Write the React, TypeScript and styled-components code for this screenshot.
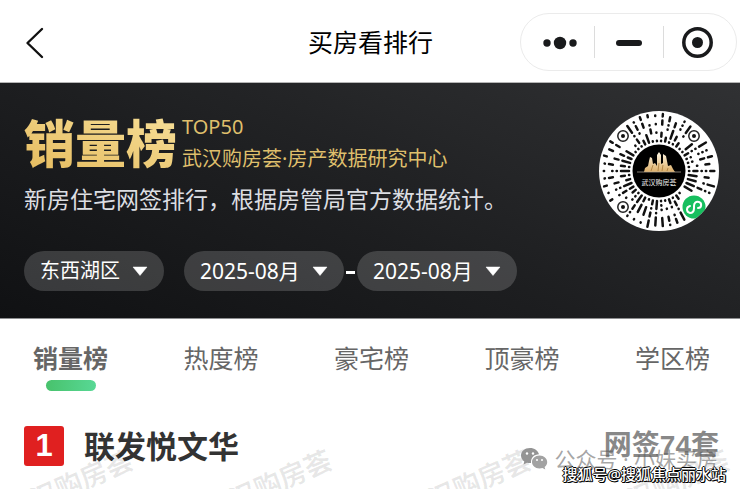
import React, { useState } from 'react';
import styled, { createGlobalStyle } from 'styled-components';

const GlobalStyle = createGlobalStyle`
  * { box-sizing: border-box; }
  body {
    margin: 0;
    background: #fff;
    font-family: "Noto Sans", "Noto Sans CJK SC", sans-serif;
  }
  button, select {
    margin: 0;
    padding: 0;
    border: 0;
    background: none;
    color: inherit;
    font: inherit;
    cursor: pointer;
  }
`;

const Page = styled.div`
  position: relative;
  height: 100vh;
  overflow: hidden;
`;

const NavBar = styled.header`
  display: grid;
  grid-template-columns: 1fr auto 1fr;
  align-items: center;
  padding: 13px 3px 11px 24px;
  border-bottom: 1px solid #b5b5b5;
`;

const BackButton = styled.button`
  display: flex;
  justify-self: start;
`;

const NavTitle = styled.h1`
  margin: 0;
  padding-right: 20px;
  font-size: 25px;
  line-height: 32px;
  font-weight: 400;
  color: #000;
`;

const Capsule = styled.div`
  display: flex;
  align-items: center;
  justify-self: end;
  height: 58px;
  padding: 0 4px;
  border: 1px solid #ebebeb;
  border-radius: 29px;
`;

const CapsuleButton = styled.button`
  display: flex;
  justify-content: center;
  width: 69px;
  & + & { border-left: 1px solid #dcdcdc; }
`;

const Hero = styled.section`
  padding: 28px 21px 27px 24px;
  color: #fff;
  background: linear-gradient(22deg, #101113 0%, #1d1e20 45%, #303133 100%);
  border-bottom: 1px solid #8d8e90;
`;

const HeroTop = styled.div`
  display: flex;
  justify-content: space-between;
  align-items: flex-start;
`;

const Brand = styled.div`
  display: flex;
  align-items: center;
  gap: 5px;
  height: 64px;
`;

const BrandName = styled.h2`
  margin: 0;
  font-size: 51px;
  line-height: 64px;
  font-weight: 900;
  color: transparent;
  background: linear-gradient(20deg, #e5ba5c, #f7e09a);
  background-clip: text;
  -webkit-background-clip: text;
`;

const BrandNote = styled.div`
  font-size: 20px;
  line-height: 32px;
  color: #dfbf6c;
`;

const Description = styled.p`
  margin: 0 0 28px;
  font-size: 23px;
  line-height: 48px;
  color: #dcdee2;
  white-space: nowrap;
`;

const Filters = styled.div`
  display: flex;
  align-items: center;
`;

const Pill = styled.label<{ $size: number }>`
  display: flex;
  align-items: center;
  gap: 12px;
  height: 40px;
  padding: 0 16px;
  border-radius: 20px;
  background: rgba(255, 255, 255, 0.17);
  font-size: ${(p) => p.$size}px;
  line-height: 28px;
`;

const PillSelect = styled.select`
  appearance: none;
  outline: none;
  option { color: #222; }
`;

const Period = styled.div`
  display: flex;
  align-items: center;
  margin-left: 20px;
`;

const Dash = styled.span`
  width: 9px;
  height: 3px;
  margin: 2px 2px 0;
  background: #fff;
`;

const Tabs = styled.nav`
  display: flex;
  justify-content: space-between;
  padding: 21px 30px 0 33px;
`;

const Tab = styled.button<{ $active: boolean }>`
  display: flex;
  flex-direction: column;
  align-items: center;
  gap: 4px;
  font-size: 25px;
  line-height: 36px;
  font-weight: ${(p) => (p.$active ? 700 : 400)};
  color: #666;
  &::after {
    content: "";
    width: 50px;
    height: 11px;
    border-radius: 6px;
    background: ${(p) => (p.$active ? 'linear-gradient(90deg, #48c26c, #58d895)' : 'none')};
  }
`;

const RankList = styled.ol`
  margin: 0;
  padding: 35px 21px 0 24px;
  list-style: none;
`;

const RankRow = styled.li`
  display: flex;
  align-items: center;
  height: 40px;
`;

const RankBadge = styled.span`
  display: grid;
  place-items: center;
  width: 40px;
  height: 40px;
  margin-right: 20px;
  border-radius: 3px;
  background: #e02020;
  color: #fff;
  font-family: "Liberation Sans", sans-serif;
  font-size: 31px;
  line-height: 40px;
  font-weight: 700;
`;

const RankName = styled.strong`
  flex: 1;
  font-size: 31px;
  line-height: 40px;
  color: #333;
`;

const RankCount = styled.strong`
  font-family: "Liberation Sans", "Noto Sans CJK SC", sans-serif;
  font-size: 28px;
  line-height: 40px;
  color: #888;
`;

const Watermark = styled.span<{ $index: number }>`
  position: absolute;
  top: 466px;
  left: ${(p) => p.$index * 199 + 1}px;
  width: 140px;
  font-size: 27px;
  line-height: 36px;
  font-weight: 700;
  color: rgba(0, 0, 0, 0.09);
  white-space: nowrap;
  transform: rotate(-23deg);
  pointer-events: none;
`;

const AccountMark = styled.div`
  position: absolute;
  top: 443px;
  right: 22px;
  display: flex;
  align-items: center;
  gap: 6px;
  font-size: 21px;
  line-height: 32px;
  color: rgba(90, 90, 90, 0.55);
  white-space: nowrap;
`;

const SourceMark = styled.div`
  position: absolute;
  top: 462px;
  right: 14px;
  font-size: 15px;
  line-height: 24px;
  font-weight: 500;
  color: #fff;
  white-space: nowrap;
  text-shadow: 1px 0 #000, -1px 0 #000, 0 1px #000, 0 -1px #000, 1px 1px #000;
`;

const polar = (radius: number, angle: number) => [
  60 + radius * Math.cos(angle),
  60 + radius * Math.sin(angle),
];

const finders = [[24, 25], [95, 25], [24, 96]];

function buildRays() {
  const parts: string[] = [];
  let seed = 91;
  const next = () => {
    seed = (seed * 16807) % 2147483647;
    return seed / 2147483647;
  };
  const count = 46;
  for (let i = 0; i < count; i += 1) {
    const angle = (i * Math.PI * 2) / count;
    let r = 30;
    while (r < 56) {
      const n = next();
      const length = n < 0.5 ? 0.3 : n < 0.82 ? 4 : 8;
      const end = Math.min(r + length, 57);
      const [x1, y1] = polar(r, angle);
      const [x2, y2] = polar(end, angle);
      const blocked =
        [[x1, y1], [x2, y2]].some(([x, y]) =>
          finders.some(([fx, fy]) => Math.hypot(x - fx, y - fy) < 8) ||
          Math.hypot(x - 95, y - 96) < 14);
      if (!blocked) {
        parts.push(`M${x1.toFixed(1)} ${y1.toFixed(1)}L${x2.toFixed(1)} ${y2.toFixed(1)}`);
      }
      r = end + 4.1 + (next() < 0.35 ? 4 : 0);
    }
  }
  return parts.join('');
}

const rays = buildRays();

const MiniCode = () => (
  <svg width="120" height="120" viewBox="0 0 120 120" role="img" aria-label="武汉购房荟">
    <defs>
      <clipPath id="disc"><circle cx="60" cy="60" r="60" /></clipPath>
      <linearGradient id="gold" x1="0" y1="0" x2="0" y2="1">
        <stop offset="0" stopColor="#fff8e4" />
        <stop offset="1" stopColor="#dcae68" />
      </linearGradient>
    </defs>
    <circle cx="60" cy="60" r="60" fill="#fff" />
    <path d={rays} stroke="#111" strokeWidth="2.500" strokeLinecap="round" fill="none" />
    {finders.map(([x, y]) => (
      <g key={`${x}-${y}`}>
        <circle cx={x} cy={y} r="5.200" fill="#fff" stroke="#222" strokeWidth="1.500" />
        <circle cx={x} cy={y} r="2" fill="#111" />
      </g>
    ))}
    <circle cx="60" cy="60" r="26.500" fill="#000" />
    <path
      d="M45 61L46 57L49 55L50 50L51 46L53 47L54 53L56 52L58 55L58 44L60 41L62 44L62 53L64 52L64 43L67 45L69 55L72 54L74 58L76 61Z"
      fill="url(#gold)"
    />
    <path d="M54 54L52 60M60 52L59 60M64 54L63 60M69 57L68 60" stroke="#a67a3a" strokeWidth="0.800" />
    <path d="M38 61H82" stroke="#b9b0a0" strokeWidth="0.700" />
    <text x="60" y="74" textAnchor="middle" fontSize="7" fontWeight="500" fill="#ddd">武汉购房荟</text>
    <g clipPath="url(#disc)">
      <circle cx="95" cy="96" r="11.500" fill="#17bf5f" />
      <path
        d="M91 95C87 96 87 101 91 102C94 102 95 100 95 97V95C95 92 97 90 100 91C103 92 103 97 99 97"
        fill="none"
        stroke="#fff"
        strokeWidth="2"
        strokeLinecap="round"
      />
    </g>
  </svg>
);

const Caret = () => (
  <svg width="16" height="10" viewBox="0 0 16 10" aria-hidden="true">
    <path d="M1 1H15L8 9.500Z" fill="#fff" stroke="#fff" strokeWidth="0.500" strokeLinejoin="round" />
  </svg>
);

const WeChatIcon = () => (
  <svg width="28" height="24" viewBox="0 0 28 24" aria-hidden="true">
    <path d="M10 1C4.500 1 1 4.500 1 8.500C1 11 2.300 13 4.300 14.400L3.500 17.500L7 15.700C8.500 16.100 10 16.200 11 16C10.500 10.500 14.500 7.400 19 7.300C18 3.500 14.500 1 10 1Z" fill="#949494" />
    <path d="M19.500 8.500C15 8.500 12 11.500 12 15C12 18.500 15 21.500 19.500 21.500C20.500 21.500 21.500 21.300 22.500 21L25.300 22.500L24.600 20C26.300 18.800 27.200 17 27.200 15C27.200 11.500 24 8.500 19.500 8.500Z" fill="#a2a2a2" />
    <g fill="#fff">
      <circle cx="7" cy="6.500" r="1.200" />
      <circle cx="13" cy="6.500" r="1.200" />
      <circle cx="17" cy="13" r="1" />
      <circle cx="22" cy="13" r="1" />
    </g>
  </svg>
);

const Picker = ({ label, options, size }: { label: string; options: string[]; size: number }) => (
  <Pill $size={size}>
    <PillSelect aria-label={label}>
      {options.map((o) => <option key={o}>{o}</option>)}
    </PillSelect>
    <Caret />
  </Pill>
);

const tabs = ['销量榜', '热度榜', '豪宅榜', '顶豪榜', '学区榜'];

export default function App() {
  const [active, setActive] = useState(tabs[0]);
  return (
    <Page>
      <GlobalStyle />
      <NavBar>
        <BackButton aria-label="返回">
          <svg width="22" height="34" viewBox="0 0 22 34">
            <path d="M18 4L3.500 18L18 32" fill="none" stroke="#111" strokeWidth="2.400" strokeLinecap="round" strokeLinejoin="round" />
          </svg>
        </BackButton>
        <NavTitle>买房看排行</NavTitle>
        <Capsule>
          <CapsuleButton aria-label="更多">
            <svg width="36" height="32" viewBox="0 0 36 32" fill="#191a1c">
              <circle cx="5" cy="17" r="3.700" />
              <circle cx="18" cy="17" r="6.200" />
              <circle cx="31" cy="17" r="3.700" />
            </svg>
          </CapsuleButton>
          <CapsuleButton aria-label="最小化">
            <svg width="26" height="32" viewBox="0 0 26 32">
              <rect y="14" width="26" height="6" rx="3" fill="#191a1c" />
            </svg>
          </CapsuleButton>
          <CapsuleButton aria-label="关闭">
            <svg width="32" height="32" viewBox="0 0 32 32">
              <circle cx="15.500" cy="16.500" r="13.700" fill="none" stroke="#191a1c" strokeWidth="3.500" />
              <circle cx="15.500" cy="16.500" r="5.500" fill="#191a1c" />
            </svg>
          </CapsuleButton>
        </Capsule>
      </NavBar>
      <Hero>
        <HeroTop>
          <div>
            <Brand>
              <BrandName>销量榜</BrandName>
              <BrandNote>
                <div>TOP50</div>
                <div>武汉购房荟·房产数据研究中心</div>
              </BrandNote>
            </Brand>
            <Description>新房住宅网签排行，根据房管局官方数据统计。</Description>
          </div>
          <MiniCode />
        </HeroTop>
        <Filters>
          <Picker label="区域" options={['东西湖区']} size={20} />
          <Period>
            <Picker label="开始月份" options={['2025-08月']} size={21} />
            <Dash />
            <Picker label="结束月份" options={['2025-08月']} size={21} />
          </Period>
        </Filters>
      </Hero>
      <Tabs>
        {tabs.map((t) => (
          <Tab key={t} $active={t === active} onClick={() => setActive(t)}>{t}</Tab>
        ))}
      </Tabs>
      <RankList>
        <RankRow>
          <RankBadge>1</RankBadge>
          <RankName>联发悦文华</RankName>
          <RankCount>网签74套</RankCount>
        </RankRow>
      </RankList>
      {[0, 1, 2, 3].map((i) => <Watermark key={i} $index={i} aria-hidden="true">武汉购房荟</Watermark>)}
      <AccountMark>
        <WeChatIcon />
        <span>公众号 · 小妹买房</span>
      </AccountMark>
      <SourceMark>搜狐号@搜狐焦点丽水站</SourceMark>
    </Page>
  );
}
